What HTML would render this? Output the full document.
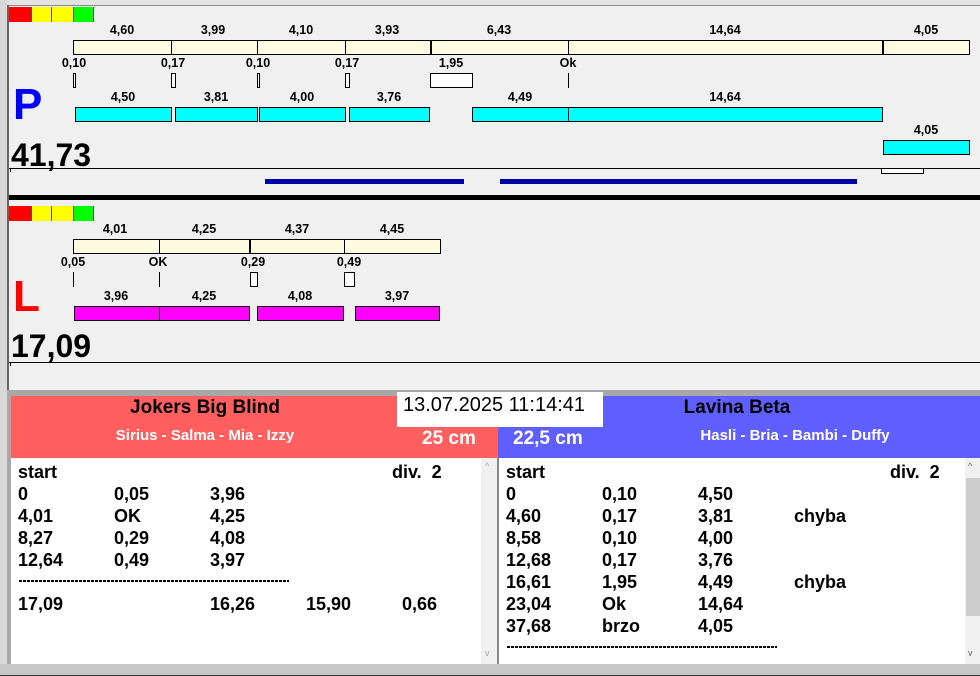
<!DOCTYPE html>
<html><head><meta charset="utf-8"><style>
*{margin:0;padding:0;box-sizing:border-box}
body{width:980px;height:676px;overflow:hidden;background:#f0f0f0;font-family:"Liberation Sans",Arial,sans-serif;position:relative}
div,span{position:absolute}
.b{border:1px solid #000}
.y{background:#fffbe0;border:1px solid #000}
.c{background:#00ffff;border:1px solid #000}
.m{background:#ff00ff;border:1px solid #000}
.t{font-size:12.5px;font-weight:bold;transform:translateX(-50%);white-space:nowrap;line-height:14px}
.v{width:1px;background:#000}
.l{font-size:18px;font-weight:bold;line-height:22px;white-space:nowrap}
.d{height:2px;background:repeating-linear-gradient(90deg,#000 0 3px,transparent 3px 4px)}
</style></head><body>
<div style="left:0;top:0;width:980px;height:5px;background:#e4e4e4"></div>
<div style="left:0;top:0;width:7px;height:676px;background:#d8d8d8"></div>
<div style="left:7px;top:5px;width:2px;height:385px;background:#666"></div>
<div style="left:9px;top:5px;width:971px;height:1px;background:#888"></div>

<div style="left:9px;top:7px;width:22px;height:15px;background:#ff0000"></div>
<div style="left:31px;top:7px;width:20px;height:15px;background:#ffff00;border-left:1px solid #555"></div>
<div style="left:51px;top:7px;width:22px;height:15px;background:#ffff00;border-left:1px solid #555"></div>
<div style="left:73px;top:7px;width:21px;height:15px;background:#00ff00;border-left:1px solid #555;border-right:1px solid #555"></div>

<span class="t" style="left:122px;top:23px">4,60</span>
<span class="t" style="left:213px;top:23px">3,99</span>
<span class="t" style="left:301px;top:23px">4,10</span>
<span class="t" style="left:387px;top:23px">3,93</span>
<span class="t" style="left:499px;top:23px">6,43</span>
<span class="t" style="left:725px;top:23px">14,64</span>
<span class="t" style="left:926px;top:23px">4,05</span>
<div class="y" style="left:73px;top:40px;width:897px;height:15px"></div>
<div class="v" style="left:171px;top:40px;height:15px"></div>
<div class="v" style="left:257px;top:40px;height:15px"></div>
<div class="v" style="left:345px;top:40px;height:15px"></div>
<div class="v" style="left:430px;top:40px;height:15px;width:2px"></div>
<div class="v" style="left:568px;top:40px;height:15px"></div>
<div class="v" style="left:882px;top:40px;height:15px;width:2px"></div>

<span class="t" style="left:74px;top:56px">0,10</span>
<span class="t" style="left:173px;top:56px">0,17</span>
<span class="t" style="left:258px;top:56px">0,10</span>
<span class="t" style="left:347px;top:56px">0,17</span>
<span class="t" style="left:451px;top:56px">1,95</span>
<span class="t" style="left:568px;top:56px">Ok</span>
<div class="b" style="left:73px;top:73px;width:3px;height:15px;background:#fff"></div>
<div class="b" style="left:171px;top:73px;width:5px;height:15px;background:#fff"></div>
<div class="b" style="left:257px;top:73px;width:3px;height:15px;background:#fff"></div>
<div class="b" style="left:345px;top:73px;width:5px;height:15px;background:#fff"></div>
<div class="b" style="left:430px;top:73px;width:43px;height:15px;background:#fff"></div>
<div class="v" style="left:568px;top:73px;height:15px"></div>

<span style="left:13px;top:80px;font-size:44px;font-weight:bold;color:#0000ff;line-height:50px">P</span>

<span class="t" style="left:123px;top:90px">4,50</span>
<span class="t" style="left:216px;top:90px">3,81</span>
<span class="t" style="left:302px;top:90px">4,00</span>
<span class="t" style="left:389px;top:90px">3,76</span>
<span class="t" style="left:520px;top:90px">4,49</span>
<span class="t" style="left:725px;top:90px">14,64</span>
<div class="c" style="left:75px;top:107px;width:97px;height:15px"></div>
<div class="c" style="left:175px;top:107px;width:83px;height:15px"></div>
<div class="c" style="left:259px;top:107px;width:87px;height:15px"></div>
<div class="c" style="left:349px;top:107px;width:81px;height:15px"></div>
<div class="c" style="left:472px;top:107px;width:97px;height:15px"></div>
<div class="c" style="left:568px;top:107px;width:315px;height:15px"></div>
<span class="t" style="left:926px;top:123px">4,05</span>
<div class="c" style="left:883px;top:140px;width:87px;height:15px"></div>

<span style="left:11px;top:137px;font-size:32px;font-weight:bold;line-height:36px">41,73</span>
<div style="left:9px;top:168px;width:971px;height:1px;background:#000"></div>
<div style="left:10px;top:168px;width:1px;height:4px;background:#000"></div>
<div class="b" style="left:881px;top:168px;width:43px;height:6px;background:#fff"></div>
<div style="left:265px;top:179px;width:199px;height:5px;background:#0000a8"></div>
<div style="left:500px;top:179px;width:357px;height:5px;background:#0000a8"></div>
<div style="left:9px;top:195px;width:971px;height:5px;background:#000"></div>

<div style="left:9px;top:206px;width:22px;height:15px;background:#ff0000"></div>
<div style="left:31px;top:206px;width:20px;height:15px;background:#ffff00;border-left:1px solid #555"></div>
<div style="left:51px;top:206px;width:22px;height:15px;background:#ffff00;border-left:1px solid #555"></div>
<div style="left:73px;top:206px;width:21px;height:15px;background:#00ff00;border-left:1px solid #555;border-right:1px solid #555"></div>

<span class="t" style="left:115px;top:222px">4,01</span>
<span class="t" style="left:204px;top:222px">4,25</span>
<span class="t" style="left:297px;top:222px">4,37</span>
<span class="t" style="left:392px;top:222px">4,45</span>
<div class="y" style="left:73px;top:239px;width:368px;height:15px"></div>
<div class="v" style="left:159px;top:239px;height:15px"></div>
<div class="v" style="left:249px;top:239px;height:15px;width:2px"></div>
<div class="v" style="left:344px;top:239px;height:15px"></div>

<span class="t" style="left:73px;top:255px">0,05</span>
<span class="t" style="left:158px;top:255px">OK</span>
<span class="t" style="left:253px;top:255px">0,29</span>
<span class="t" style="left:349px;top:255px">0,49</span>
<div class="v" style="left:73px;top:272px;height:15px"></div>
<div class="v" style="left:159px;top:272px;height:15px"></div>
<div class="b" style="left:250px;top:272px;width:8px;height:15px;background:#fff"></div>
<div class="b" style="left:344px;top:272px;width:11px;height:15px;background:#fff"></div>

<span style="left:13px;top:272px;font-size:44px;font-weight:bold;color:#ff0000;line-height:50px">L</span>

<span class="t" style="left:116px;top:289px">3,96</span>
<span class="t" style="left:204px;top:289px">4,25</span>
<span class="t" style="left:300px;top:289px">4,08</span>
<span class="t" style="left:397px;top:289px">3,97</span>
<div class="m" style="left:74px;top:306px;width:86px;height:15px"></div>
<div class="m" style="left:159px;top:306px;width:91px;height:15px"></div>
<div class="m" style="left:257px;top:306px;width:87px;height:15px"></div>
<div class="m" style="left:355px;top:306px;width:85px;height:15px"></div>

<span style="left:11px;top:328px;font-size:32px;font-weight:bold;line-height:36px">17,09</span>
<div style="left:9px;top:362px;width:971px;height:1px;background:#000"></div>
<div style="left:10px;top:362px;width:1px;height:4px;background:#000"></div>

<div style="left:7px;top:390px;width:973px;height:6px;background:#a8a8a8"></div>
<div style="left:7px;top:390px;width:4px;height:286px;background:#a8a8a8"></div>
<div style="left:11px;top:396px;width:487px;height:62px;background:#ff5f5f"></div>
<div style="left:498px;top:396px;width:482px;height:62px;background:#5f5fff"></div>
<div style="left:397px;top:392px;width:206px;height:35px;background:#fff"></div>
<span style="left:403px;top:393px;font-size:20px;line-height:24px">13.07.2025 11:14:41</span>
<span style="left:205px;top:397px;transform:translateX(-50%);font-size:19px;font-weight:bold;line-height:22px;white-space:nowrap">Jokers Big Blind</span>
<span style="left:205px;top:427px;transform:translateX(-50%);font-size:15px;font-weight:bold;color:#fff;line-height:18px;white-space:nowrap">Sirius - Salma - Mia - Izzy</span>
<span style="left:422px;top:428px;font-size:19px;font-weight:bold;color:#fff;line-height:22px">25 cm</span>
<span style="left:513px;top:428px;font-size:19px;font-weight:bold;color:#fff;line-height:22px">22,5 cm</span>
<span style="left:737px;top:397px;transform:translateX(-50%);font-size:19px;font-weight:bold;line-height:22px;white-space:nowrap">Lavina Beta</span>
<span style="left:795px;top:427px;transform:translateX(-50%);font-size:15px;font-weight:bold;color:#fff;line-height:18px;white-space:nowrap">Hasli - Bria - Bambi - Duffy</span>

<div style="left:11px;top:458px;width:470px;height:206px;background:#fff"></div>
<div style="left:481px;top:458px;width:16px;height:206px;background:#f0f0f0"></div>
<span style="left:485px;top:461px;font-size:9px;color:#aaa">^</span>
<span style="left:485px;top:648px;font-size:9px;color:#aaa">v</span>
<div style="left:497px;top:458px;width:2px;height:206px;background:#888"></div>
<div style="left:499px;top:458px;width:466px;height:206px;background:#fff"></div>
<div style="left:965px;top:458px;width:15px;height:206px;background:#f0f0f0"></div>
<div style="left:966px;top:478px;width:14px;height:138px;background:#cdcdcd"></div>
<span style="left:968px;top:461px;font-size:9px;color:#666">^</span>
<span style="left:968px;top:648px;font-size:9px;color:#666">v</span>
<div style="left:0;top:664px;width:980px;height:11px;background:#c8c8c8"></div>
<div style="left:0;top:675px;width:980px;height:1px;background:#333"></div>

<span class="l" style="left:18px;top:461px">start</span>
<span class="l" style="left:392px;top:461px">div.&nbsp; 2</span>
<span class="l" style="left:18px;top:483px">0</span><span class="l" style="left:114px;top:483px">0,05</span><span class="l" style="left:210px;top:483px">3,96</span>
<span class="l" style="left:18px;top:505px">4,01</span><span class="l" style="left:114px;top:505px">OK</span><span class="l" style="left:210px;top:505px">4,25</span>
<span class="l" style="left:18px;top:527px">8,27</span><span class="l" style="left:114px;top:527px">0,29</span><span class="l" style="left:210px;top:527px">4,08</span>
<span class="l" style="left:18px;top:549px">12,64</span><span class="l" style="left:114px;top:549px">0,49</span><span class="l" style="left:210px;top:549px">3,97</span>
<div class="d" style="left:19px;top:580px;width:270px"></div>
<span class="l" style="left:18px;top:593px">17,09</span><span class="l" style="left:210px;top:593px">16,26</span><span class="l" style="left:306px;top:593px">15,90</span><span class="l" style="left:402px;top:593px">0,66</span>

<span class="l" style="left:506px;top:461px">start</span>
<span class="l" style="left:890px;top:461px">div.&nbsp; 2</span>
<span class="l" style="left:506px;top:483px">0</span><span class="l" style="left:602px;top:483px">0,10</span><span class="l" style="left:698px;top:483px">4,50</span>
<span class="l" style="left:506px;top:505px">4,60</span><span class="l" style="left:602px;top:505px">0,17</span><span class="l" style="left:698px;top:505px">3,81</span><span class="l" style="left:794px;top:505px">chyba</span>
<span class="l" style="left:506px;top:527px">8,58</span><span class="l" style="left:602px;top:527px">0,10</span><span class="l" style="left:698px;top:527px">4,00</span>
<span class="l" style="left:506px;top:549px">12,68</span><span class="l" style="left:602px;top:549px">0,17</span><span class="l" style="left:698px;top:549px">3,76</span>
<span class="l" style="left:506px;top:571px">16,61</span><span class="l" style="left:602px;top:571px">1,95</span><span class="l" style="left:698px;top:571px">4,49</span><span class="l" style="left:794px;top:571px">chyba</span>
<span class="l" style="left:506px;top:593px">23,04</span><span class="l" style="left:602px;top:593px">Ok</span><span class="l" style="left:698px;top:593px">14,64</span>
<span class="l" style="left:506px;top:615px">37,68</span><span class="l" style="left:602px;top:615px">brzo</span><span class="l" style="left:698px;top:615px">4,05</span>
<div class="d" style="left:507px;top:646px;width:270px"></div>
</body></html>
